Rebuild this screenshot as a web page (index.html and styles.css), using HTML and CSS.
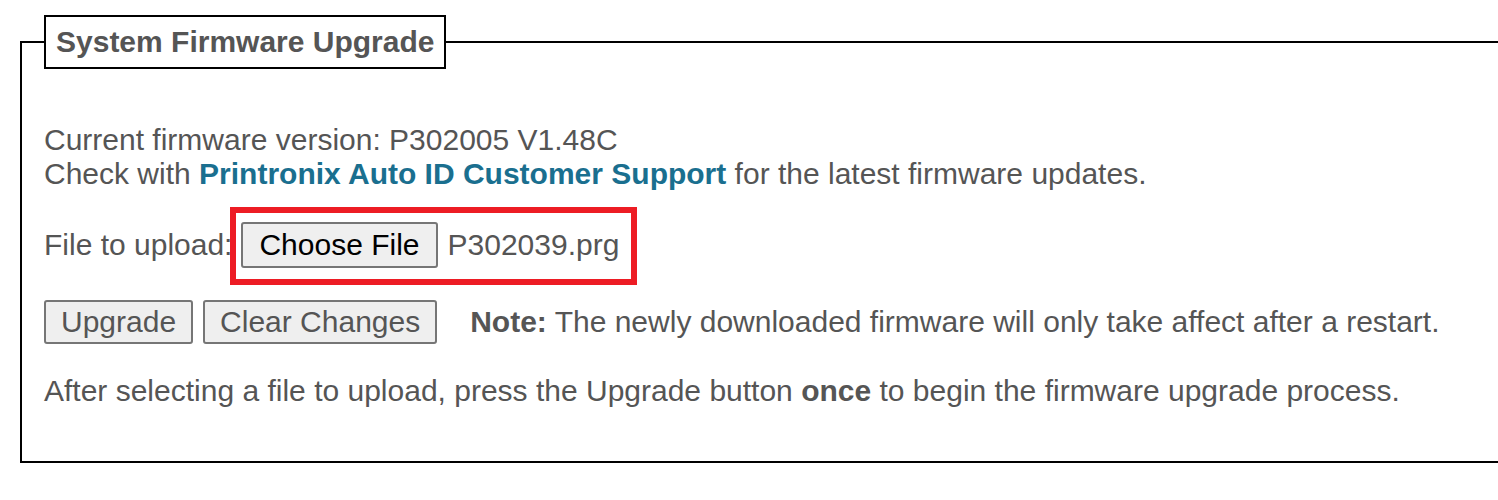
FILE: index.html
```html
<!DOCTYPE html>
<html lang="en">
<head>
  <meta charset="UTF-8">
  <meta name="viewport" content="width=device-width, initial-scale=1.0">
  <title>System Firmware Upgrade</title>
  <link rel="stylesheet" href="styles.css">
</head>
<body>
  <fieldset class="panel">
    <legend class="panelTitle">System Firmware Upgrade</legend>

    <p class="info">
      Current firmware version: P302005 V1.48C<br>
      Check with <a href="#" class="support">Printronix Auto ID Customer Support</a> for the latest firmware updates.
    </p>

    <div class="uploadRow">
      <span class="label">File to upload:</span>
      <span class="filePick">
        <button class="btn btnFile" type="button">Choose File</button>
        <span class="fileName">P302039.prg</span>
        <span class="highlight"></span>
      </span>
    </div>

    <div class="actionRow">
      <button class="btn" type="button">Upgrade</button>
      <button class="btn" type="button">Clear Changes</button>
      <span class="note"><b>Note:</b> The newly downloaded firmware will only take affect after a restart.</span>
    </div>

    <p class="hint">After selecting a file to upload, press the Upgrade button <b>once</b> to begin the firmware upgrade process.</p>
  </fieldset>
</body>
</html>
```

FILE: styles.css
```css
html{
  overflow: hidden;
}

body{
  margin: 0;
  font-family: "Liberation Sans", Arial, sans-serif;
  font-size: 30px;
  color: #555;
  background: #fff;
}

.panel{
  margin: 15px 0 0 20px;
  width: 1540px;
  padding: 0 0 0 22px;
  border: 2px solid #000;
  height: 448px;
  box-sizing: border-box;
}

.panelTitle{
  border: 2px solid #000;
  padding: 8px 10px 8px 10px;
  font-weight: bold;
  color: #555;
  margin-left: 0;
}

.info{
  margin: 54px 0 0 0;
}

.support{
  color: #1a6f8f;
  font-weight: bold;
  text-decoration: none;
}

.uploadRow{
  display: flex;
  align-items: center;
  margin-top: 31px;
}

.label{
  margin-right: 9px;
}

.filePick{
  position: relative;
  display: inline-flex;
  align-items: center;
}

.btn{
  font-family: "Liberation Sans", Arial, sans-serif;
  font-size: 30px;
  color: #555;
  background: #efefef;
  border: 2px solid #767676;
  border-radius: 3px;
  padding: 3px 15px;
  margin: 0;
  line-height: normal;
}

.btnFile{
  color: #000;
  padding: 4px 16px;
}

.fileName{
  margin-left: 10px;
}

/* red annotation frame around the file picker */
.highlight{
  position: absolute;
  top: -15px;
  left: -11px;
  right: -18px;
  bottom: -17px;
  border: 6px solid #ed1c24;
}

.actionRow{
  display: flex;
  align-items: center;
  gap: 10px;
  margin-top: 32px;
}

.note{
  margin-left: 23px;
}

.hint{
  margin: 30px 0 0 0;
}
```
